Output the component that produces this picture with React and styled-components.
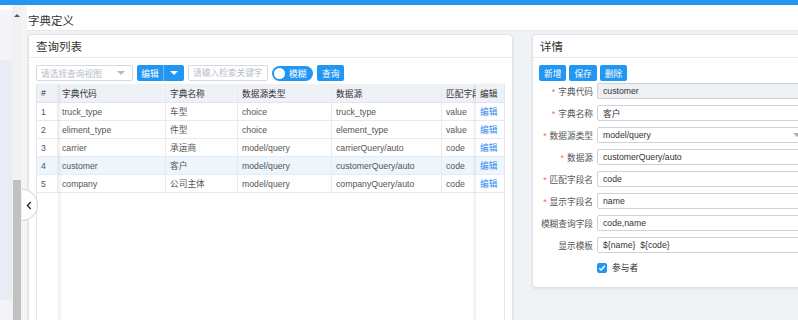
import React from 'react';
import styled, { createGlobalStyle } from 'styled-components';

const GlobalStyle = createGlobalStyle`
  html, body { margin: 0; padding: 0; }
  body {
    font-family: "Liberation Sans", "Noto Sans CJK SC", sans-serif;
    font-size: 8.7px;
    color: #555;
    background: #fff;
    overflow: hidden;
  }
  * { box-sizing: border-box; }
`;

const Page = styled.div`
  position: relative;
  width: 798px;
  height: 320px;
  overflow: hidden;
  display: flex;
  flex-direction: column;
`;

const TopBar = styled.div`
  height: 5px;
  flex-shrink: 0;
  background: #2196f3;
`;

const Body = styled.div`
  flex: 1;
  display: flex;
  min-height: 0;
  background: #f4f4f5;
`;

const Sidebar = styled.div`
  width: 12px;
  display: flex;
  flex-direction: column;
  background: #f3f4f7;
`;

const SideBlock = styled.div`
  height: ${(p) => p.h}px;
  background: ${(p) => p.bg};
`;

const ScrollTrack = styled.div`
  width: 10px;
  display: flex;
  flex-direction: column;
  align-items: center;
  background: #f1f1f1;
`;

const ScrollArrow = styled.div`
  margin-top: 9px;
  width: 0;
  height: 0;
  border-left: 3px solid transparent;
  border-right: 3px solid transparent;
  border-bottom: 3px solid #555;
`;

const ScrollThumb = styled.div`
  margin-top: auto;
  width: 8px;
  height: 140px;
  background: #c1c1c1;
`;

const Main = styled.main`
  flex: 1;
  min-width: 0;
  margin-left: 5px;
  display: flex;
  flex-direction: column;
  background: #f0f2f5;
`;

const PageHeader = styled.div`
  height: 26px;
  flex-shrink: 0;
  padding: 7px 0 0 1px;
  background: #fff;
  border-bottom: 1px solid #e8eaee;
  font-size: 11.5px;
  color: #333;
`;

const Content = styled.div`
  flex: 1;
  display: flex;
  align-items: flex-start;
  gap: 19px;
  padding: 3px 0 0 1px;
  min-height: 0;
`;

const Card = styled.section`
  flex: 0 0 ${(p) => p.w}px;
  height: ${(p) => p.h}px;
  display: flex;
  flex-direction: column;
  background: #fff;
  border: 1px solid #dfe3e9;
  border-radius: 4px;
  box-shadow: 0 1px 3px rgba(0, 0, 0, 0.08);
`;

const CardHeader = styled.div`
  height: 23px;
  flex-shrink: 0;
  display: flex;
  align-items: center;
  padding-left: 7px;
  border-bottom: 1px solid #e6e9ee;
  font-size: 11.5px;
  color: #333;
`;

const CardBody = styled.div`
  flex: 1;
  min-height: 0;
  display: flex;
  flex-direction: column;
  padding: 7px 7px 0 7px;
`;

const Toolbar = styled.div`
  display: flex;
  align-items: center;
  gap: 4px;
  height: 16px;
  margin-bottom: 3px;
`;

const SelectBox = styled.div`
  width: ${(p) => p.w}px;
  height: 16px;
  display: flex;
  align-items: center;
  justify-content: space-between;
  padding: 0 7px 0 4px;
  border: 1px solid #d5dae1;
  border-radius: 2px;
  background: #fff;
  color: #b8bec7;
`;

const Caret = styled.span`
  width: 0;
  height: 0;
  border-left: 4px solid transparent;
  border-right: 4px solid transparent;
  border-top: 4px solid ${(p) => p.color || '#b4bac2'};
`;

const Button = styled.button`
  height: 16px;
  padding: 0 5px;
  display: flex;
  align-items: center;
  border: none;
  border-radius: 2px;
  background: #2196f3;
  color: #fff;
  font: inherit;
  font-size: 8.7px;
`;

const SplitButton = styled.div`
  display: flex;
  height: 16px;
  border-radius: 2px;
  overflow: hidden;
  background: #2196f3;
  color: #fff;
`;

const SplitPart = styled.div`
  width: ${(p) => p.w}px;
  display: flex;
  align-items: center;
  justify-content: center;
  border-left: ${(p) => (p.divider ? '1px solid rgba(255,255,255,0.35)' : 'none')};
`;

const SearchInput = styled.input`
  width: 80px;
  height: 16px;
  padding: 0 4px;
  border: 1px solid #d5dae1;
  border-radius: 2px;
  font: inherit;
  font-size: 8.7px;
  outline: none;
  &::placeholder { color: #b8bec7; }
`;

const Toggle = styled.div`
  width: 41px;
  height: 15px;
  display: flex;
  align-items: center;
  gap: 4px;
  padding: 0 2px;
  border-radius: 8px;
  background: #2196f3;
  color: #fff;
`;

const Knob = styled.span`
  width: 11px;
  height: 11px;
  border-radius: 50%;
  background: #fff;
`;

const Grid = styled.div`
  flex: 1;
  display: flex;
  min-height: 0;
  border-left: 1px solid #e3e7ed;
  border-right: 1px solid #e3e7ed;
`;

const Section = styled.div`
  position: relative;
  z-index: ${(p) => (p.fixed ? 1 : 0)};
  display: flex;
  flex-direction: column;
  flex: 0 0 auto;
  overflow: hidden;
  background: #fff;
  box-shadow: ${(p) =>
    p.fixed === 'left'
      ? '2px 0 3px rgba(0,0,0,0.07)'
      : p.fixed === 'right'
      ? '-2px 0 3px rgba(0,0,0,0.07)'
      : 'none'};
`;

const Row = styled.div`
  display: flex;
  height: ${(p) => (p.head ? 19 : 18)}px;
  background: ${(p) => (p.head ? '#eef1f6' : p.active ? '#edf5fd' : '#fff')};
  border-bottom: 1px solid ${(p) => (p.head ? '#e1e5eb' : '#e8ebef')};
  color: ${(p) => (p.head ? '#333' : '#555')};
`;

const Cell = styled.div`
  width: ${(p) => p.w}px;
  flex-shrink: 0;
  display: flex;
  align-items: center;
  padding-left: 4px;
  white-space: nowrap;
  overflow: hidden;
  border-right: ${(p) => (p.last ? 'none' : '1px solid #e8ebef')};
  color: ${(p) => (p.link ? '#2d8cf0' : 'inherit')};
`;

const Filler = styled.div`
  flex: 1;
  display: flex;
`;

const FillerCol = styled.div`
  width: ${(p) => p.w}px;
  border-right: ${(p) => (p.last ? 'none' : '1px solid #f0f2f5')};
`;

const ButtonRow = styled.div`
  display: flex;
  gap: 3px;
  margin-left: -1px;
  height: 16px;
`;

const FormRow = styled.div`
  display: flex;
  align-items: center;
  height: 16px;
  margin-top: ${(p) => p.gap}px;
`;

const Label = styled.label`
  width: 53px;
  margin-right: 4px;
  text-align: right;
  white-space: nowrap;
  color: #555;
`;

const Star = styled.span`
  margin-right: 3px;
  color: #f56c6c;
`;

const Field = styled.div`
  flex: 1;
  height: 16px;
  display: flex;
  align-items: center;
  justify-content: space-between;
  padding: 0 4px 0 5px;
  border: 1px solid #cdd3db;
  border-radius: 2px;
  background: ${(p) => (p.disabled ? '#eef0f4' : '#fff')};
  color: #333;
  white-space: pre;
`;

const CheckRow = styled.div`
  display: flex;
  align-items: center;
  gap: 5px;
  margin-top: 8px;
  padding-left: 57px;
  color: #333;
`;

const CheckBox = styled.span`
  width: 10px;
  height: 10px;
  display: flex;
  align-items: center;
  justify-content: center;
  border-radius: 2px;
  background: #2196f3;
`;

const CollapseHandle = styled.div`
  position: absolute;
  left: 22px;
  top: 189px;
  width: 16px;
  height: 32px;
  display: flex;
  align-items: center;
  padding-left: 4px;
  background: #fff;
  border: 1px solid #d3d6db;
  border-left: none;
  border-radius: 0 16px 16px 0;
  z-index: 5;
`;

const leftCol = { key: '#', w: 21 };
const midCols = [
  { key: '字典代码', w: 108 },
  { key: '字典名称', w: 72 },
  { key: '数据源类型', w: 94 },
  { key: '数据源', w: 110 },
  { key: '匹配字段', w: 34 },
];
const rightCol = { key: '编辑', w: 28 };

const rows = [
  ['1', 'truck_type', '车型', 'choice', 'truck_type', 'value'],
  ['2', 'eliment_type', '件型', 'choice', 'element_type', 'value'],
  ['3', 'carrier', '承运商', 'model/query', 'carrierQuery/auto', 'code'],
  ['4', 'customer', '客户', 'model/query', 'customerQuery/auto', 'code'],
  ['5', 'company', '公司主体', 'model/query', 'companyQuery/auto', 'code'],
];

const ACTIVE = 3;

const fields = [
  { label: '字典代码', value: 'customer', required: true, disabled: true },
  { label: '字典名称', value: '客户', required: true },
  { label: '数据源类型', value: 'model/query', required: true, select: true },
  { label: '数据源', value: 'customerQuery/auto', required: true },
  { label: '匹配字段名', value: 'code', required: true },
  { label: '显示字段名', value: 'name', required: true },
  { label: '模糊查询字段', value: 'code,name' },
  { label: '显示模板', value: '${name}  ${code}' },
];

const DataTable = () => (
  <Grid>
    <Section fixed="left">
      <Row head>
        <Cell w={leftCol.w}>{leftCol.key}</Cell>
      </Row>
      {rows.map((r, i) => (
        <Row key={i} active={i === ACTIVE}>
          <Cell w={leftCol.w}>{r[0]}</Cell>
        </Row>
      ))}
      <Filler><FillerCol w={leftCol.w} last /></Filler>
    </Section>
    <Section>
      <Row head>
        {midCols.map((c, i) => (
          <Cell key={c.key} w={c.w} last={i === midCols.length - 1}>{c.key}</Cell>
        ))}
      </Row>
      {rows.map((r, i) => (
        <Row key={i} active={i === ACTIVE}>
          {midCols.map((c, j) => (
            <Cell key={c.key} w={c.w} last={j === midCols.length - 1}>{r[j + 1]}</Cell>
          ))}
        </Row>
      ))}
    </Section>
    <Section fixed="right">
      <Row head>
        <Cell w={rightCol.w} last>{rightCol.key}</Cell>
      </Row>
      {rows.map((r, i) => (
        <Row key={i} active={i === ACTIVE}>
          <Cell w={rightCol.w} last link>编辑</Cell>
        </Row>
      ))}
      <Filler><FillerCol w={rightCol.w} last /></Filler>
    </Section>
  </Grid>
);

const App = () => (
  <Page>
    <GlobalStyle />
    <TopBar />
    <Body>
      <Sidebar>
        <SideBlock h={5} bg="#fff" />
        <SideBlock h={50} bg="#f4f5f8" />
        <SideBlock h={240} bg="#e9edf3" />
      </Sidebar>
      <ScrollTrack>
        <ScrollArrow />
        <ScrollThumb />
      </ScrollTrack>
      <Main>
        <PageHeader>字典定义</PageHeader>
        <Content>
          <Card w={485} h={320}>
            <CardHeader>查询列表</CardHeader>
            <CardBody>
              <Toolbar>
                <SelectBox w={97}>
                  请选择查询视图
                  <Caret />
                </SelectBox>
                <SplitButton>
                  <SplitPart w={26}>编辑</SplitPart>
                  <SplitPart w={21} divider><Caret color="#fff" /></SplitPart>
                </SplitButton>
                <SearchInput placeholder="请输入检索关键字" />
                <Toggle>
                  <Knob />
                  模糊
                </Toggle>
                <Button>查询</Button>
              </Toolbar>
              <DataTable />
            </CardBody>
          </Card>
          <Card w={282} h={254}>
            <CardHeader>详情</CardHeader>
            <CardBody>
              <ButtonRow>
                <Button>新增</Button>
                <Button>保存</Button>
                <Button>删除</Button>
              </ButtonRow>
              {fields.map((f, i) => (
                <FormRow key={f.label} gap={i === 0 ? 2 : 6}>
                  <Label>
                    {f.required && <Star>*</Star>}
                    {f.label}
                  </Label>
                  <Field disabled={f.disabled}>
                    {f.value}
                    {f.select && <Caret color="#a9afb8" />}
                  </Field>
                </FormRow>
              ))}
              <CheckRow>
                <CheckBox>
                  <svg width="8" height="8" viewBox="0 0 8 8">
                    <path d="M1.3 4.2 L3.2 6 L6.8 1.8" fill="none" stroke="#fff" strokeWidth="1.4" />
                  </svg>
                </CheckBox>
                参与者
              </CheckRow>
            </CardBody>
          </Card>
        </Content>
      </Main>
    </Body>
    <CollapseHandle>
      <svg width="6" height="9" viewBox="0 0 6 9">
        <path d="M4.8 1 L1.5 4.5 L4.8 8" fill="none" stroke="#333" strokeWidth="1.5" />
      </svg>
    </CollapseHandle>
  </Page>
);

export default App;
